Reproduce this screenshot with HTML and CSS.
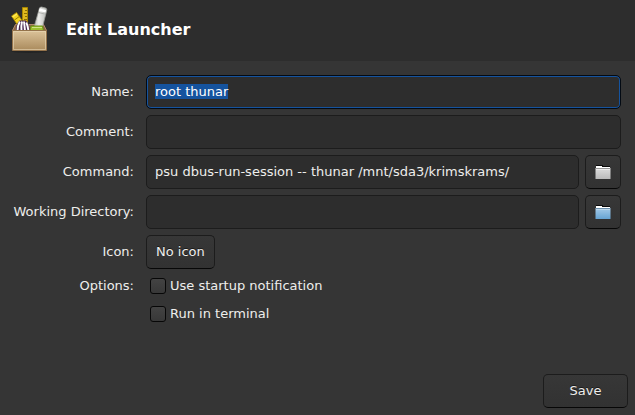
FILE: index.html
```html
<!DOCTYPE html>
<html lang="en">
<head>
  <meta charset="UTF-8">
  <meta name="viewport" content="width=device-width, initial-scale=1.0">
  <title>Edit Launcher</title>
  <link rel="stylesheet" href="styles.css">
</head>
<body>
  <header class="header">
    <svg class="logo" width="48" height="48" viewBox="0 0 48 48" aria-hidden="true">
      <defs>
        <linearGradient id="box" x1="0" y1="0" x2="0" y2="1">
          <stop offset="0" stop-color="#dcc39a"/>
          <stop offset="1" stop-color="#a98a5c"/>
        </linearGradient>
        <linearGradient id="roll" x1="0" y1="0" x2="1" y2="0">
          <stop offset="0" stop-color="#b4b6b2"/>
          <stop offset="0.4" stop-color="#ececea"/>
          <stop offset="1" stop-color="#b4b6b2"/>
        </linearGradient>
      </defs>
      <ellipse cx="23.500" cy="45.500" rx="18" ry="1.500" fill="#242424"/>
      <path d="M9.500 18.500h28l3 6h-34z" fill="#8a6648" stroke="#b58d70"/>
      <path d="M5.500 10l5-3.500 7 10-5 4z" fill="#f2d420" stroke="#a88600" stroke-width="0.800"/>
      <path d="M6.500 11l4.500-3" stroke="#ffe95a" stroke-width="1.500"/>
      <path d="M8.500 14l5.500-4" stroke="#9a7c00"/>
      <path d="M16.500 1.500h5v20h-5z" fill="#e0b91f" stroke="#a88600"/>
      <path d="M19 4.500h2M18 7.500h3M19 10.500h2M18 13.500h3" stroke="#8a6f00"/>
      <path d="M33.500 2q0.500-1 2-1l4 1q1.500 0.500 1.300 2L36 23h-8.500z" fill="url(#roll)" stroke="#9a9c98" stroke-width="0.800"/>
      <path d="M33.500 2.500l6.500 1.500-0.500 2.500-6.500-1.500z" fill="#fff"/>
      <path d="M32.500 6.500l6 1.500" stroke="#a6a8a4" stroke-width="0.800"/>
      <path d="M10 25c0-5 1-8 3.500-10.500h6.500c2 2 3.500 5 4 10.500z" fill="#47244f"/>
      <path d="M13.800 15.500q-2.300 4-2.300 9.500M16 15.500q-1 4-0.500 9.500M18 15.500q0.500 4 1 9.500M20.300 16.500q1.500 3 2.200 8.500" fill="none" stroke="#fff" stroke-width="1.900"/>
      <path d="M25 20h11.500l1 5H24z" fill="#9cc030" stroke="#6c9214"/>
      <path d="M26 21.500h10" stroke="#cfe582"/>
      <path d="M6.500 24.500h34v20h-34z" fill="url(#box)" stroke="#94734b"/>
      <path d="M7.500 43.500v-18h32v18z" fill="none" stroke="#ead8b8" stroke-opacity="0.600"/>
    </svg>
    <h1>Edit Launcher</h1>
  </header>

  <form class="launcher" id="launcher">
    <label for="name">Name:</label>
    <input class="entry" type="text" id="name" value="root thunar" autocomplete="off">

    <label for="comment">Comment:</label>
    <input class="entry" type="text" id="comment" autocomplete="off">

    <label for="command">Command:</label>
    <div class="file-row">
      <input class="entry" type="text" id="command" value="psu dbus-run-session -- thunar /mnt/sda3/krimskrams/" spellcheck="false">
      <button class="button browse" type="button" aria-label="Choose command">
        <svg width="16" height="16" viewBox="0 0 16 16">
          <defs>
            <linearGradient id="grey" x1="0" y1="0" x2="0" y2="1">
              <stop offset="0" stop-color="#dedede"/>
              <stop offset="1" stop-color="#bababa"/>
            </linearGradient>
          </defs>
          <path d="M1 1h7v1h7v2H1z" fill="#0c0c0c"/>
          <path d="M1 2h6v1h8v2H1z" fill="#fff"/>
          <path d="M0.500 4h15v11h-15z" fill="url(#grey)"/>
          <path d="M1 4.500h14" stroke="#999"/>
          <path d="M1 5.500h14" stroke="#eee"/>
        </svg>
      </button>
    </div>

    <label for="directory">Working Directory:</label>
    <div class="file-row">
      <input class="entry" type="text" id="directory" autocomplete="off">
      <button class="button browse" type="button" aria-label="Choose working directory">
        <svg width="16" height="16" viewBox="0 0 16 16">
          <defs>
            <linearGradient id="blue" x1="0" y1="0" x2="0" y2="1">
              <stop offset="0" stop-color="#a5cbe8"/>
              <stop offset="1" stop-color="#66a3d2"/>
            </linearGradient>
          </defs>
          <path d="M1 1h7v1h7v2H1z" fill="#0c0c0c"/>
          <path d="M1 2h6v1h8v2H1z" fill="#fff"/>
          <path d="M0.500 4h15v11h-15z" fill="url(#blue)"/>
          <path d="M1 4.500h14" stroke="#6c8fac"/>
          <path d="M1 5.500h14" stroke="#bcd9ee"/>
        </svg>
      </button>
    </div>

    <label for="icon">Icon:</label>
    <button class="button icon-button" type="button" id="icon">No icon</button>

    <span class="caption" id="options">Options:</span>
    <div class="options" role="group" aria-labelledby="options">
      <label class="check"><input type="checkbox">Use startup notification</label>
      <label class="check"><input type="checkbox">Run in terminal</label>
    </div>
  </form>

  <footer class="actions">
    <button class="button save" type="submit" form="launcher">Save</button>
  </footer>

  <script>
    const nameEntry = document.getElementById('name');
    nameEntry.focus();
    nameEntry.select();
  </script>
</body>
</html>
```
FILE: styles.css
```css
* {
  box-sizing: border-box;
}
body {
  display: flex;
  flex-direction: column;
  min-height: 100vh;
  margin: 0;
  background: #353535;
  color: #eeeeec;
  font-family: "DejaVu Sans", sans-serif;
  font-size: 13px;
  line-height: 16px;
}
.header {
  display: flex;
  align-items: center;
  gap: 12px;
  padding: 6px 6px 7px;
  background: #2d2d2d;
}
.header h1 {
  margin: 0;
  color: #fff;
  font-size: 16px;
  line-height: 20px;
}
.logo {
  width: 48px;
  height: 48px;
}
.launcher {
  display: grid;
  grid-template-columns: 120px 1fr;
  align-items: center;
  gap: 6px 12px;
  padding: 14px;
}
.launcher > label,
.caption {
  display: flex;
  justify-content: flex-end;
  white-space: nowrap;
}
.entry,
.button {
  height: 34px;
  border: 1px solid #1c1c1c;
  border-radius: 5px;
  color: inherit;
  font: inherit;
}
.entry {
  width: 100%;
  min-width: 0;
  padding: 0 8px 2px;
  background: #2d2d2d;
}
.entry:focus {
  border-color: #030a13;
  outline: none;
  box-shadow: inset 0 0 0 1px #15539e;
}
.entry::selection {
  background: #15539e;
  color: #fff;
}
.button {
  padding: 0 9px;
  background: linear-gradient(#373737, #323232);
  border-bottom-color: #070707;
  text-shadow: 0 -1px #1a1a1a;
}
.button:hover {
  background: #3a3a3a;
}
.file-row {
  display: flex;
  gap: 6px;
}
.browse {
  display: flex;
  flex: none;
  align-items: center;
  justify-content: center;
  width: 36px;
}
.icon-button {
  justify-self: start;
}
.caption {
  align-self: start;
  line-height: 22px;
}
.options {
  display: flex;
  flex-direction: column;
  align-items: flex-start;
  gap: 6px;
  padding-left: 4px;
}
.check {
  display: flex;
  align-items: center;
  gap: 4px;
  height: 22px;
}
.check input {
  appearance: none;
  width: 16px;
  height: 16px;
  margin: 0;
  background: linear-gradient(#434343, #383838);
  border: 1px solid #070707;
  border-radius: 3px;
}
.check input:checked {
  background: #15539e;
}
.actions {
  display: flex;
  justify-content: flex-end;
  margin-top: auto;
  padding: 7px;
}
.save {
  width: 85px;
}
```
